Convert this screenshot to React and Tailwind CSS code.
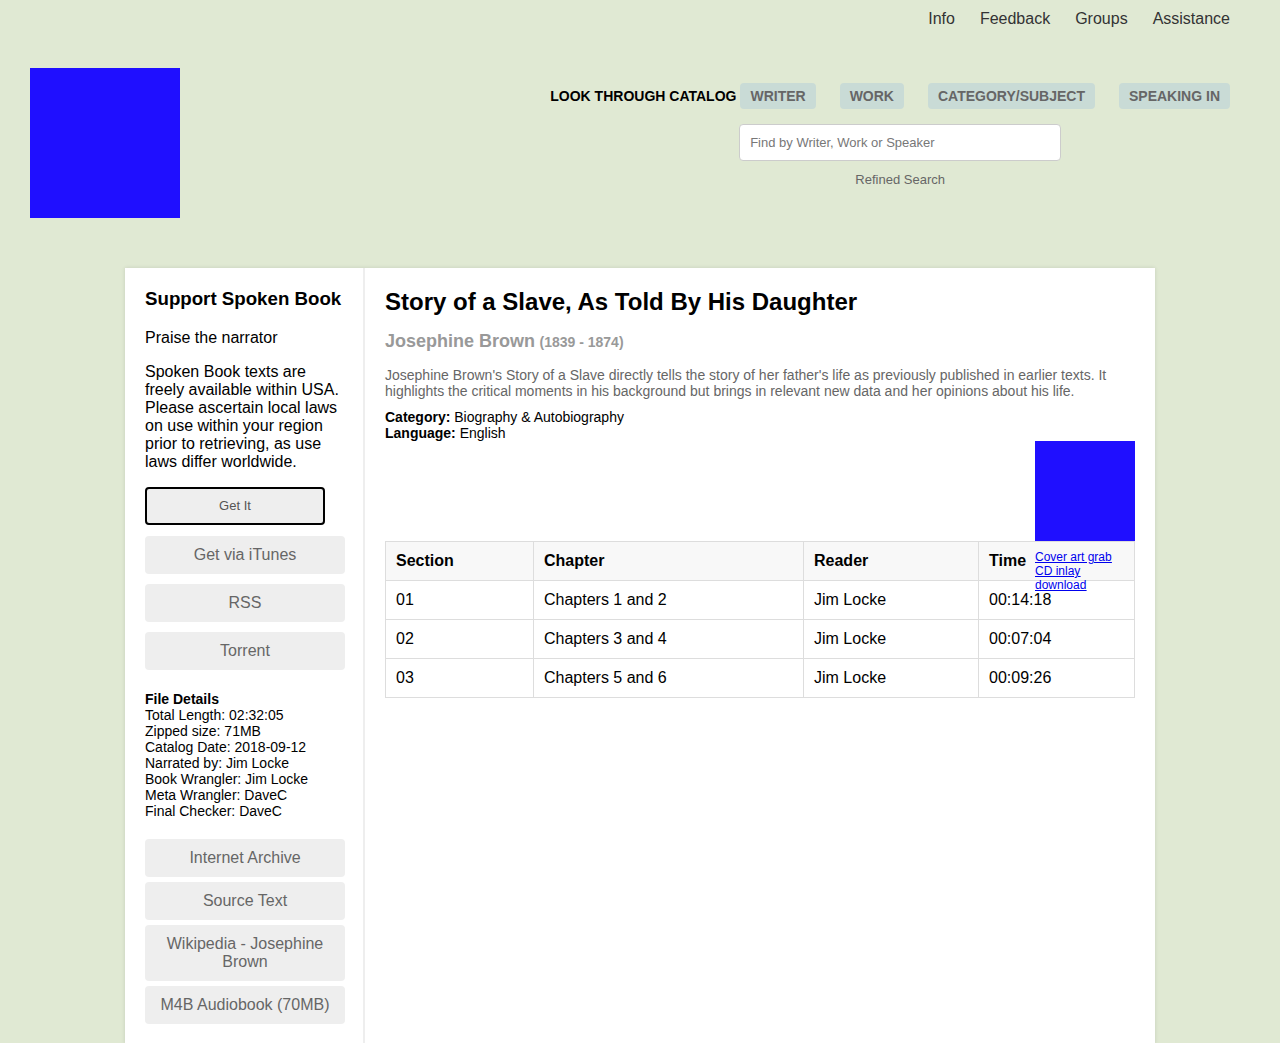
import React from "react";

const navLinks = ["Info", "Feedback", "Groups", "Assistance"];
const pills = ["Writer", "Work", "Category/Subject", "Speaking In"];

const sections = [
  { id: "01", chapter: "Chapters 1 and 2", reader: "Jim Locke", time: "00:14:18" },
  { id: "02", chapter: "Chapters 3 and 4", reader: "Jim Locke", time: "00:07:04" },
  { id: "03", chapter: "Chapters 5 and 6", reader: "Jim Locke", time: "00:09:26" },
];

const details = [
  "Total Length: 02:32:05",
  "Zipped size: 71MB",
  "Catalog Date: 2018-09-12",
  "Narrated by: Jim Locke",
  "Book Wrangler: Jim Locke",
  "Meta Wrangler: DaveC",
  "Final Checker: DaveC",
];

// Grey sidebar button
const SideButton = ({ children }) => (
  <a className="flex w-[200px] items-center justify-center rounded-[4px] bg-[#eeeeee] px-2 py-[10px] text-center text-[16px] leading-[18px] text-[#666666]">
    {children}
  </a>
);

export default function App() {
  return (
    <div className="min-h-[1043px] bg-[#e0e9d3] font-['Liberation_Sans',Arial,sans-serif] text-black">
      {/* top links */}
      <nav className="flex justify-end gap-[25px] pr-[50px] pt-[9px] text-[16px] leading-[20px] text-[#333333]">
        {navLinks.map((l) => (
          <a key={l}>{l}</a>
        ))}
      </nav>

      {/* header */}
      <header className="flex justify-between pl-[30px] pr-[50px] pt-[39px]">
        <div className="h-[150px] w-[150px] bg-[#1f0fff]" />
        <div className="flex flex-col items-center pt-[15px]">
          <div className="flex items-center">
            <span className="mr-[4px] text-[14px] font-bold uppercase">Look through catalog</span>
            <div className="flex gap-[24px]">
              {pills.map((p) => (
                <a
                  key={p}
                  className="rounded-[4px] bg-[#c9dbd6] px-[10px] py-[4px] text-[14px] font-bold uppercase leading-[18px] text-[#666666]"
                >
                  {p}
                </a>
              ))}
            </div>
          </div>
          <div className="ml-[20px] flex flex-col items-center">
            <input
              className="mt-[15px] h-[37px] w-[322px] rounded-[4px] border border-[#cccccc] bg-white px-[10px] text-[13px] text-[#555] placeholder:text-[#777]"
              placeholder="Find by Writer, Work or Speaker"
            />
            <a className="mt-[9px] text-[13px] text-[#666666]">Refined Search</a>
          </div>
        </div>
      </header>

      {/* main card */}
      <main className="mx-auto mt-[50px] flex w-[1030px] bg-white shadow-[0_0_4px_rgba(0,0,0,0.12)]">
        <aside className="w-[240px] shrink-0 border-r-2 border-[#eeeeee] px-[20px] pb-[20px] pt-[20px]">
          <h3 className="text-[18.7px] font-bold leading-[22px]">Support Spoken Book</h3>
          <p className="mt-[19px] text-[16px] leading-[18px]">Praise the narrator</p>
          <p className="mt-[16px] text-[16px] leading-[18px]">
            Spoken Book texts are freely available within USA. Please ascertain local laws on use within your
            region prior to retrieving, as use laws differ worldwide.
          </p>
          <button className="mt-[16px] h-[38px] w-[180px] rounded-[4px] border-2 border-black bg-[#eeeeee] text-[13px] text-[#555555]">
            Get It
          </button>
          <div className="mt-[11px] flex flex-col gap-[10px]">
            <SideButton>Get via iTunes</SideButton>
            <SideButton>RSS</SideButton>
            <SideButton>Torrent</SideButton>
          </div>
          <div className="mt-[21px] text-[14px] leading-[16px]">
            <div className="font-bold">File Details</div>
            {details.map((d) => (
              <div key={d}>{d}</div>
            ))}
          </div>
          <div className="mt-[20px] flex flex-col gap-[5px]">
            <SideButton>Internet Archive</SideButton>
            <SideButton>Source Text</SideButton>
            <SideButton>Wikipedia - Josephine Brown</SideButton>
            <SideButton>M4B Audiobook (70MB)</SideButton>
          </div>
        </aside>

        <section className="flex-1 px-[20px] pt-[20px]">
          <h1 className="text-[24px] font-bold leading-[28px]">Story of a Slave, As Told By His Daughter</h1>
          <div className="mt-[12px] font-bold text-[#999999]">
            <span className="text-[18px]">Josephine Brown</span>{" "}
            <span className="text-[14px]">(1839 - 1874)</span>
          </div>
          <p className="mt-[12px] text-[14px] leading-[16px] text-[#666666]">
            Josephine Brown's Story of a Slave directly tells the story of her father's life as previously published
            in earlier texts. It highlights the critical moments in his background but brings in relevant new data and
            her opinions about his life.
          </p>
          <div className="mt-[10px] text-[14px] leading-[16px]">
            <div>
              <b>Category:</b> Biography &amp; Autobiography
            </div>
            <div>
              <b>Language:</b> English
            </div>
          </div>
          <div className="flex h-[100px] justify-end">
            <div className="relative z-10 w-[100px]">
              <div className="h-[100px] w-[100px] bg-[#1f0fff]" />
              <div className="mt-[9px] flex flex-col text-[12px] leading-[14px] text-[#0000ee] underline">
                <a>Cover art grab</a>
                <a>CD inlay</a>
                <a>download</a>
              </div>
            </div>
          </div>
          <table className="w-full border-collapse text-[16px]">
            <thead>
              <tr className="h-[39px] bg-[#f8f8f8] text-left">
                <th className="w-[148px] border border-[#dddddd] px-[10px]">Section</th>
                <th className="w-[270px] border border-[#dddddd] px-[10px]">Chapter</th>
                <th className="w-[175px] border border-[#dddddd] px-[10px]">Reader</th>
                <th className="border border-[#dddddd] px-[10px]">Time</th>
              </tr>
            </thead>
            <tbody>
              {sections.map((s) => (
                <tr key={s.id} className="h-[39px]">
                  <td className="border border-[#dddddd] px-[10px]">{s.id}</td>
                  <td className="border border-[#dddddd] px-[10px]">{s.chapter}</td>
                  <td className="border border-[#dddddd] px-[10px]">{s.reader}</td>
                  <td className="border border-[#dddddd] px-[10px]">{s.time}</td>
                </tr>
              ))}
            </tbody>
          </table>
        </section>
      </main>
    </div>
  );
}
